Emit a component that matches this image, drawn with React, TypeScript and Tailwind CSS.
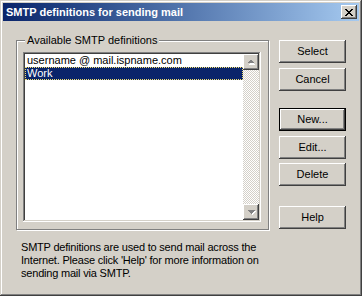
const raised =
	"shadow-[inset_-1px_-1px_#404040,inset_1px_1px_#fff,inset_-2px_-2px_#808080,inset_2px_2px_#d4d0c8]";

function Button({ label, className = "" }: { label: string; className?: string }) {
	return (
		<div
			className={`flex h-[23px] w-[67px] items-center justify-center bg-[#d4d0c8] text-black ${raised} ${className}`}
		>
			{label}
		</div>
	);
}

function DefaultButton({ label, className = "" }: { label: string; className?: string }) {
	return (
		<div className={`h-[23px] w-[67px] border border-black ${className}`}>
			<div
				className={`flex h-full w-full items-center justify-center bg-[#d4d0c8] text-black ${raised}`}
			>
				{label}
			</div>
		</div>
	);
}

function Arrow({ up }: { up: boolean }) {
	return (
		<svg width="9" height="6" viewBox="0 0 9 6" shapeRendering="crispEdges">
			{up ? (
				<>
					<path d="M4 2h1v1h1v1h1v1H1V4h1V3h1V2h1z" fill="#fff" transform="translate(1 1)" />
					<path d="M4 1h1v1h1v1h1v1H1V3h1V2h1V1z" fill="#808080" />
				</>
			) : (
				<>
					<path d="M1 1h7v1H7v1H6v1H5v1H4V4H3V3H2V2H1z" fill="#fff" transform="translate(1 1)" />
					<path d="M1 1h7v1H7v1H6v1H5v1H4V4H3V3H2V2H1z" fill="#808080" />
				</>
			)}
		</svg>
	);
}

function CloseGlyph() {
	return (
		<svg width="8" height="7" viewBox="0 0 8 7" shapeRendering="crispEdges">
			<path
				d="M0 0h2v1h1v1h2V1h1V0h2v1H7v1H6v1H5v1h1v1h1v1h1v1H6V6H5V5H3v1H2v1H0V6h1V5h1V4h1V3H2V2H1V1H0z"
				fill="#000"
			/>
		</svg>
	);
}

export default function App() {
	return (
		<div
			className={`flex h-[296px] w-[362px] flex-col bg-[#d4d0c8] p-[3px] font-['Liberation_Sans',Arial,sans-serif] text-[11px] leading-[13px] text-black shadow-[inset_-1px_-1px_#404040,inset_1px_1px_#d4d0c8,inset_-2px_-2px_#808080,inset_2px_2px_#fff]`}
		>
			<div className="flex h-[18px] items-center justify-between bg-gradient-to-r from-[#0a246a] to-[#a6caf0] pl-[3px] pr-[2px]">
				<span className="font-bold text-white">SMTP definitions for sending mail</span>
				<div className={`flex h-[14px] w-[16px] items-center justify-center bg-[#d4d0c8] ${raised}`}>
					<CloseGlyph />
				</div>
			</div>

			<div className="flex flex-1">
				<div className="flex flex-col pl-[13px] pt-[13px]">
					<fieldset className="h-[196px] w-[253px] border border-[#808080] shadow-[inset_1px_1px_0_#fff,1px_1px_0_#fff]">
						<legend className="ml-[8px] bg-[#d4d0c8] px-[2px] leading-[13px]">
							Available SMTP definitions
						</legend>
						<div className="ml-[6px] mt-[5px] flex h-[170px] w-[238px] bg-white p-[2px] shadow-[inset_-1px_-1px_#fff,inset_1px_1px_#808080,inset_-2px_-2px_#d4d0c8,inset_2px_2px_#404040]">
							<div className="flex flex-1 flex-col">
								<div className="h-[13px] pl-[2px] leading-[13px]">username @ mail.ispname.com</div>
								<div className="h-[13px] bg-[#0a246a] pl-[2px] leading-[11px] text-white outline outline-1 -outline-offset-1 outline-dotted outline-[#f0e070]">
									<span className="block pt-[1px]">Work</span>
								</div>
							</div>
							<div className="flex w-[16px] flex-col bg-[repeating-conic-gradient(#d4d0c8_0%_25%,#fff_0%_50%)] bg-[length:2px_2px]">
								<div className={`flex h-[16px] w-[16px] items-center justify-center bg-[#d4d0c8] ${raised}`}>
									<Arrow up />
								</div>
								<div className="flex-1" />
								<div className={`flex h-[16px] w-[16px] items-center justify-center bg-[#d4d0c8] ${raised}`}>
									<Arrow up={false} />
								</div>
							</div>
						</div>
					</fieldset>
					<p className="mt-[11px] whitespace-nowrap pl-[5px] tracking-[-0.2px]">
						SMTP definitions are used to send mail across the
						<br />
						Internet. Please click 'Help' for more information on
						<br />
						sending mail via SMTP.
					</p>
				</div>

				<div className="ml-[10px] flex flex-col pt-[19px]">
					<Button label="Select" />
					<Button label="Cancel" className="mt-[5px]" />
					<DefaultButton label="New..." className="mt-[17px]" />
					<Button label="Edit..." className="mt-[5px]" />
					<Button label="Delete" className="mt-[4px]" />
					<Button label="Help" className="mt-[20px]" />
				</div>
			</div>
		</div>
	);
}
